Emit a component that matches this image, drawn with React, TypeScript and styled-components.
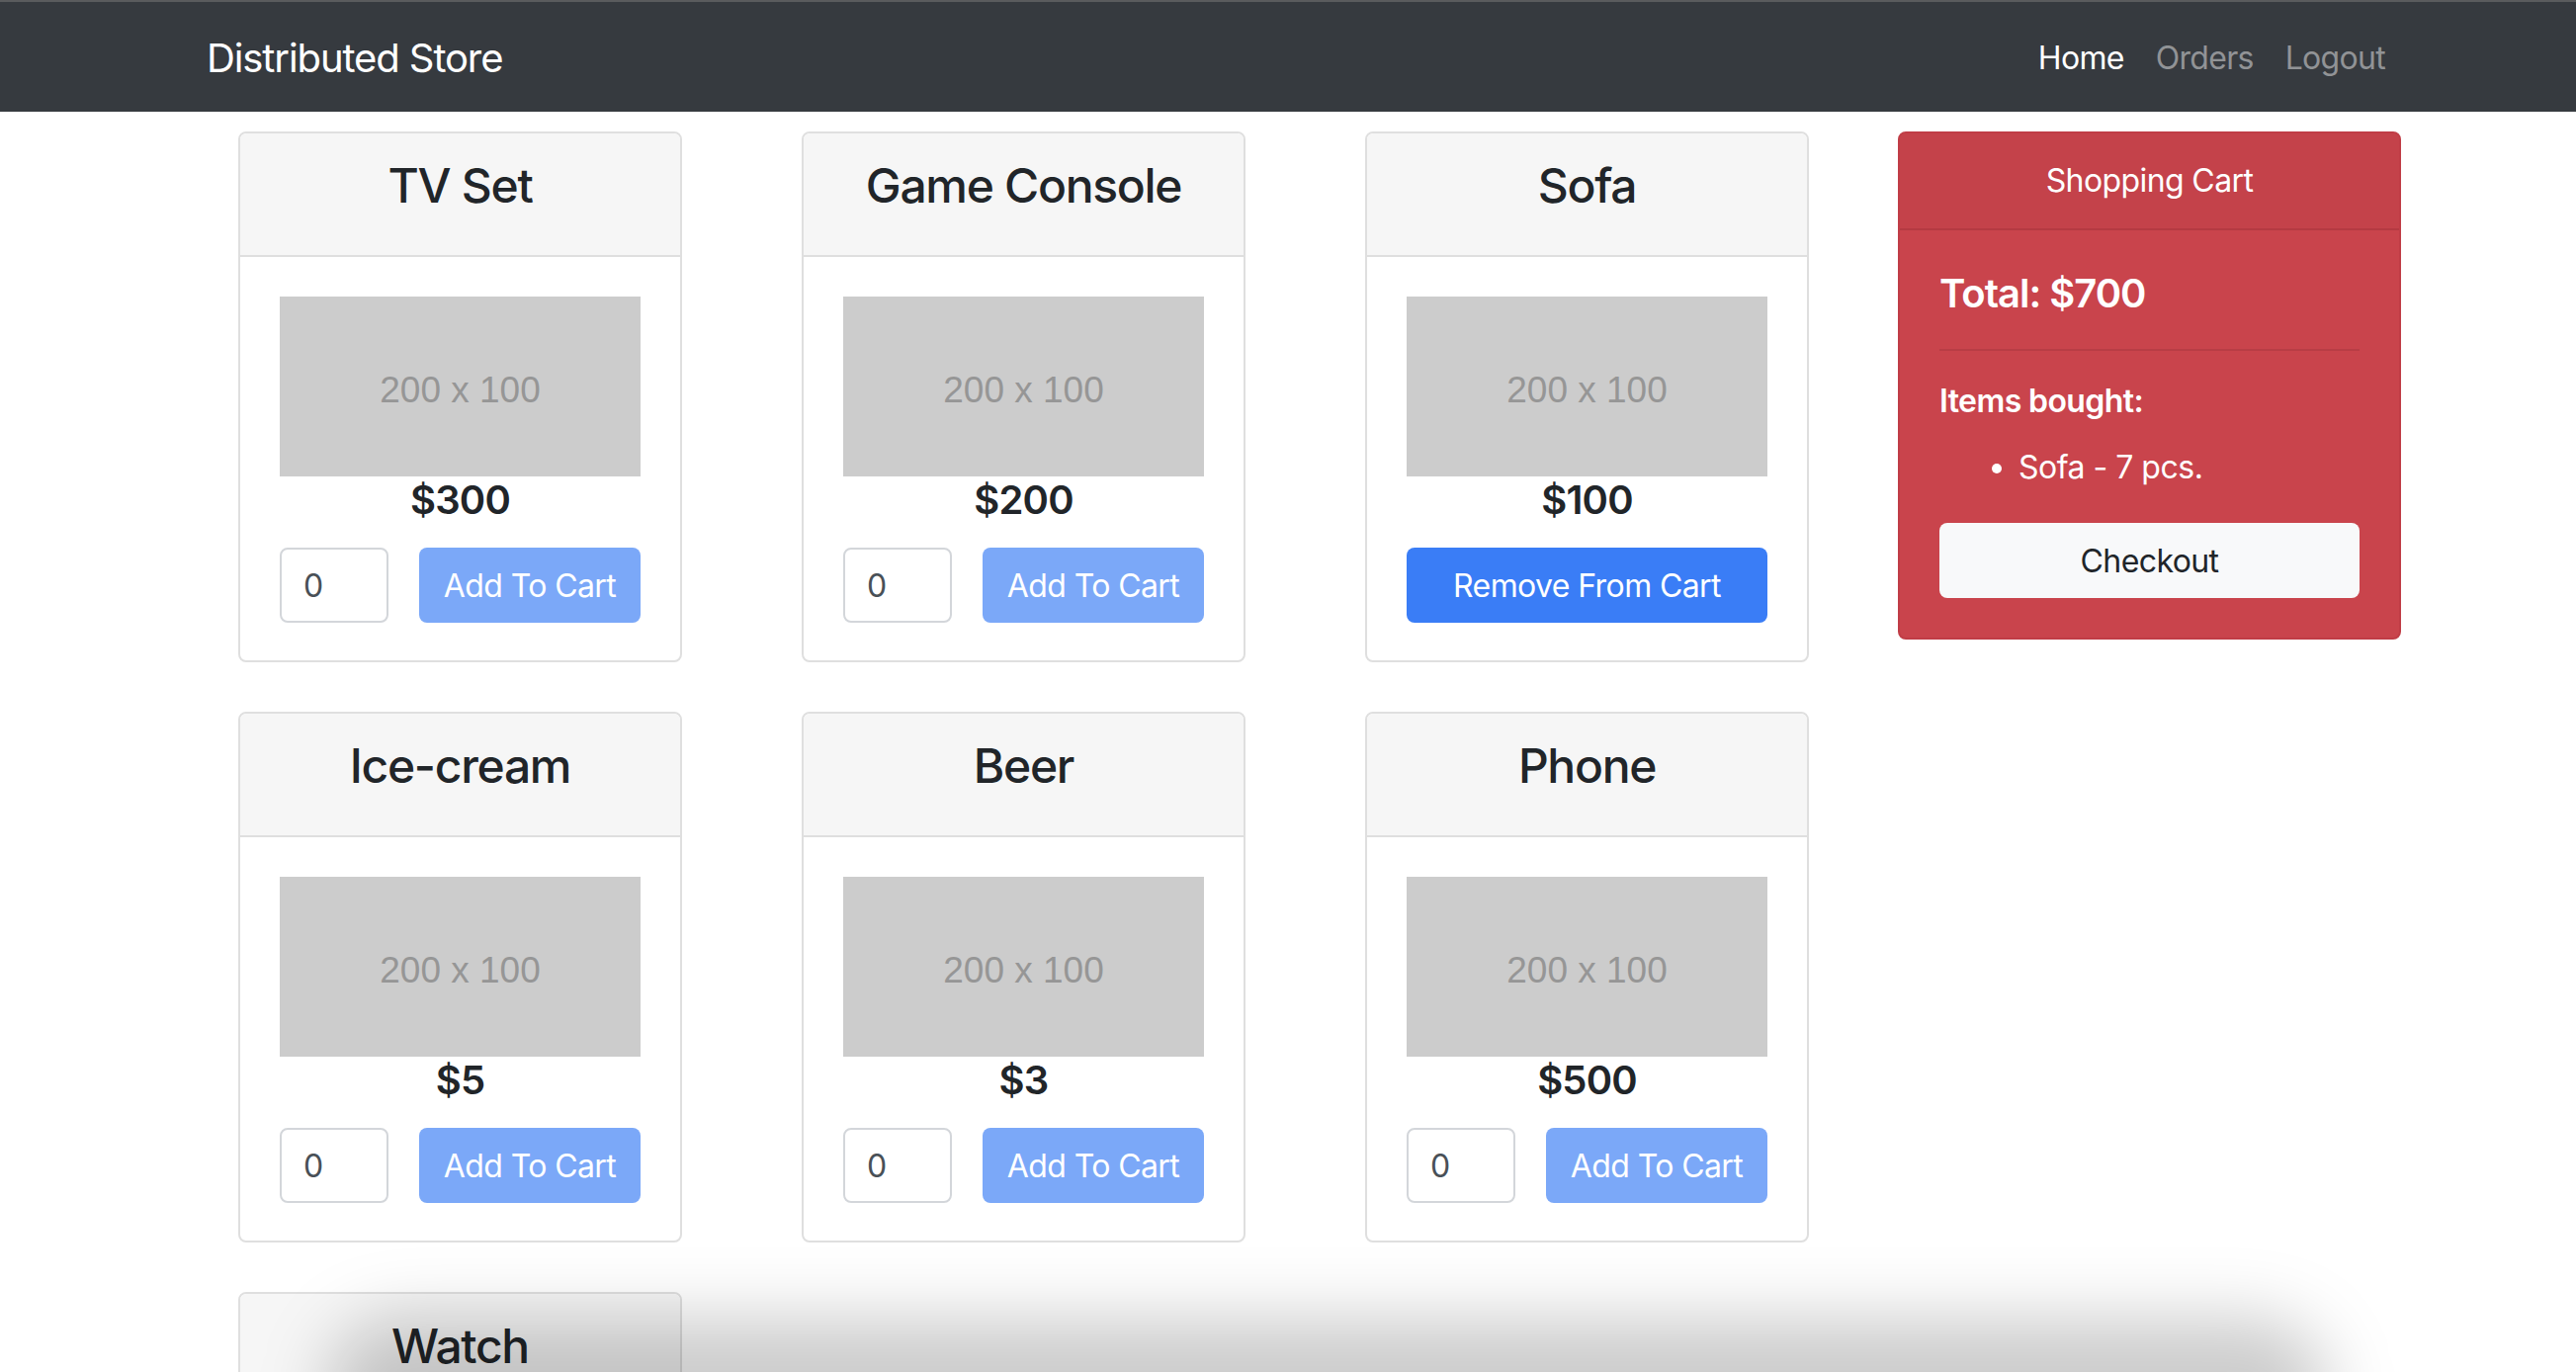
import React from "react";
import styled, { createGlobalStyle } from "styled-components";

const GlobalStyle = createGlobalStyle`
  * { box-sizing: border-box; }
  html, body { margin: 0; padding: 0; background: #ffffff; }
  body {
    font-family: Inter, "Noto Sans", "Liberation Sans", sans-serif;
    color: #212529;
    -webkit-font-smoothing: antialiased;
  }
`;

const NavBar = styled.nav`
  height: 113px;
  border-top: 2px solid #5a5b5d;
  background: #363a3f;
  display: flex;
  align-items: center;
  justify-content: space-between;
  padding: 0 177px 0 209px;
`;

const Brand = styled.a`
  font-size: 40px;
  line-height: 60px;
  color: #ffffff;
  letter-spacing: -1.1px;
  text-decoration: none;
  margin-top: 2px;
`;

const NavLinks = styled.div`
  display: flex;
  align-items: center;
  margin-top: 2px;
`;

const NavLink = styled.a<{ $active?: boolean }>`
  font-size: 32px;
  line-height: 48px;
  padding: 0 16px;
  letter-spacing: -0.7px;
  color: ${(p) => (p.$active ? "#ffffff" : "#919396")};
  text-decoration: none;
`;

const Main = styled.main`
  display: flex;
  align-items: flex-start;
  padding: 20px 0 0 241px;
`;

const ProductGrid = styled.div`
  display: grid;
  grid-template-columns: repeat(3, 449px);
  column-gap: 121px;
  row-gap: 50px;
`;

const Card = styled.div`
  border: 2px solid #dfdfdf;
  border-radius: 8px;
  background: #ffffff;
  overflow: hidden;
`;

const CardHeader = styled.div`
  background: #f6f6f6;
  border-bottom: 2px solid #dfdfdf;
  padding: 24px 20px 25px;
  text-align: center;
`;

const Title = styled.h4`
  margin: 0 0 16px;
  font-size: 48px;
  line-height: 57.6px;
  font-weight: 500;
  letter-spacing: -1.3px;
  white-space: nowrap;
  color: #212529;
`;

const CardBody = styled.div`
  padding: 40px 40px 38px;
  display: flex;
  flex-direction: column;
`;

const Placeholder = styled.div`
  width: 100%;
  aspect-ratio: 2 / 1;
  background: #cccccc;
  display: flex;
  align-items: center;
  justify-content: center;
  font-family: "Liberation Sans", Arial, sans-serif;
  font-size: 37px;
  color: #969696;
  padding-top: 8px;
`;

const Price = styled.h5`
  margin: 0 0 24px;
  font-size: 40px;
  line-height: 48px;
  font-weight: 600;
  letter-spacing: -0.8px;
  text-align: center;
  color: #212529;
`;

const Controls = styled.div`
  display: flex;
  justify-content: space-between;
  align-items: center;
`;

const QtyInput = styled.input`
  width: 110px;
  height: 76px;
  border: 2px solid #d3d6da;
  border-radius: 8px;
  padding: 0 22px;
  font-family: inherit;
  font-size: 32px;
  color: #495057;
  background: #ffffff;
  outline: none;
`;

const Button = styled.button<{ $variant: "faded" | "primary" | "light"; $block?: boolean }>`
  height: 76px;
  border: none;
  border-radius: 8px;
  padding: 0;
  font-family: inherit;
  font-size: 32px;
  letter-spacing: -0.6px;
  white-space: nowrap;
  text-align: center;
  width: ${(p) => (p.$block ? "100%" : "224px")};
  background: ${(p) =>
    p.$variant === "faded" ? "#7ba8f8" : p.$variant === "primary" ? "#3a7df6" : "#f8f9fa"};
  color: ${(p) => (p.$variant === "light" ? "#212529" : "#ffffff")};
  cursor: pointer;
`;

const Cart = styled.aside`
  width: 509px;
  margin-left: 90px;
  border: 2px solid #c03d46;
  border-radius: 8px;
  background: #c9444c;
  color: #ffffff;
  overflow: hidden;
`;

const CartHeader = styled.div`
  background: #c4424a;
  border-bottom: 2px solid #b43a42;
  padding: 24px 40px;
  text-align: center;
  font-size: 32px;
  line-height: 48px;
  letter-spacing: -0.6px;
`;

const CartBody = styled.div`
  padding: 40px;
`;

const Total = styled.h5`
  margin: 0 0 16px;
  font-size: 40px;
  line-height: 48px;
  font-weight: 600;
  letter-spacing: -1px;
`;

const Divider = styled.hr`
  margin: 32px 0;
  border: 0;
  border-top: 2px solid #b83d45;
`;

const ItemsLabel = styled.h6`
  margin: 0 0 24px;
  font-size: 32px;
  line-height: 38.4px;
  font-weight: 600;
  letter-spacing: -0.6px;
`;

const ItemList = styled.ul`
  margin: 0 0 32px;
  padding-left: 80px;
  font-size: 32px;
  line-height: 48px;
  letter-spacing: -0.5px;
`;

const Shadow = styled.div`
  position: fixed;
  left: 330px;
  right: 250px;
  bottom: -95px;
  height: 150px;
  border-radius: 80px;
  background: rgba(0, 0, 0, 0.2);
  filter: blur(34px);
  pointer-events: none;
  z-index: 5;
`;

type Product = { name: string; price: number; inCart?: boolean };

const products: Product[] = [
  { name: "TV Set", price: 300 },
  { name: "Game Console", price: 200 },
  { name: "Sofa", price: 100, inCart: true },
  { name: "Ice-cream", price: 5 },
  { name: "Beer", price: 3 },
  { name: "Phone", price: 500 },
  { name: "Watch", price: 150 },
];

const ProductCard: React.FC<{ product: Product }> = ({ product }) => (
  <Card>
    <CardHeader>
      <Title>{product.name}</Title>
    </CardHeader>
    <CardBody>
      <Placeholder>200 x 100</Placeholder>
      <Price>${product.price}</Price>
      <Controls>
        {product.inCart ? (
          <Button $variant="primary" $block>
            Remove From Cart
          </Button>
        ) : (
          <>
            <QtyInput type="number" defaultValue={0} />
            <Button $variant="faded">Add To Cart</Button>
          </>
        )}
      </Controls>
    </CardBody>
  </Card>
);

export default function App() {
  return (
    <>
      <GlobalStyle />
      <NavBar>
        <Brand href="#">Distributed Store</Brand>
        <NavLinks>
          <NavLink href="#" $active>
            Home
          </NavLink>
          <NavLink href="#">Orders</NavLink>
          <NavLink href="#">Logout</NavLink>
        </NavLinks>
      </NavBar>
      <Main>
        <ProductGrid>
          {products.map((p) => (
            <ProductCard key={p.name} product={p} />
          ))}
        </ProductGrid>
        <Cart>
          <CartHeader>Shopping Cart</CartHeader>
          <CartBody>
            <Total>Total: $700</Total>
            <Divider />
            <ItemsLabel>Items bought:</ItemsLabel>
            <ItemList>
              <li>Sofa - 7 pcs.</li>
            </ItemList>
            <Button $variant="light" $block>
              Checkout
            </Button>
          </CartBody>
        </Cart>
      </Main>
      <Shadow />
    </>
  );
}
